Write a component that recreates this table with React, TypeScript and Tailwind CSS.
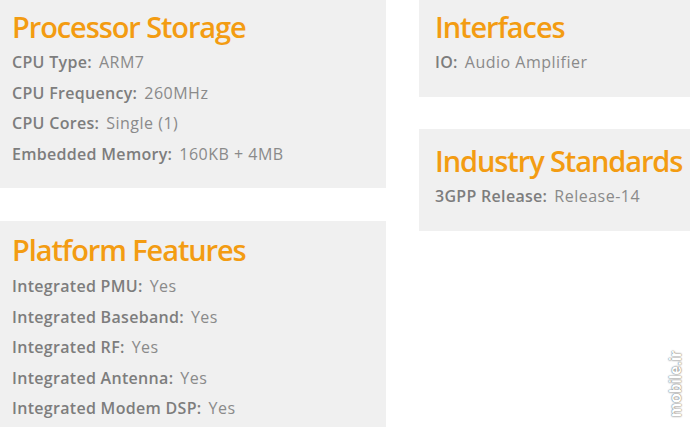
import React from 'react'

type Spec = { label: string; value: string }

const font = { fontFamily: '"Open Sans", "Noto Sans", sans-serif' }

const Row = ({ label, value }: Spec) => (
  <div className="h-[30.5px] leading-[30.5px] text-[16px] whitespace-nowrap">
    <span className="font-semibold text-[#7d7d7d] tracking-[0.3px]">{label}:</span>
    <span className="ml-[7px] text-[#8a8a8a] tracking-[0.5px]">{value}</span>
  </div>
)

const Heading = ({ children }: { children: React.ReactNode }) => (
  <h2 className="text-[29px] leading-[36px] font-semibold text-[#f39c12] tracking-[-1.1px] whitespace-nowrap">
    {children}
  </h2>
)

const App = () => {
  return (
    <div
      className="relative w-[690px] h-[427px] overflow-hidden bg-white flex gap-[33px]"
      style={font}
    >
      {/* left column */}
      <div className="w-[386px] flex flex-col gap-[33px] shrink-0">
        <section className="h-[188px] shrink-0 bg-[#f0f0f0] pl-[12px] pt-[9px]">
          <Heading>Processor Storage</Heading>
          <div className="mt-[2px]">
            <Row label="CPU Type" value="ARM7" />
            <Row label="CPU Frequency" value="260MHz" />
            <Row label="CPU Cores" value="Single (1)" />
            <Row label="Embedded Memory" value="160KB + 4MB" />
          </div>
        </section>
        <section className="h-[220px] shrink-0 bg-[#f0f0f0] pl-[12px] pt-[11px]">
          <Heading>Platform Features</Heading>
          <div className="mt-[3px]">
            <Row label="Integrated PMU" value="Yes" />
            <Row label="Integrated Baseband" value="Yes" />
            <Row label="Integrated RF" value="Yes" />
            <Row label="Integrated Antenna" value="Yes" />
            <Row label="Integrated Modem DSP" value="Yes" />
          </div>
        </section>
      </div>

      {/* right column */}
      <div className="flex-1 flex flex-col gap-[32px]">
        <section className="h-[97px] shrink-0 bg-[#f0f0f0] pl-[16px] pt-[9px]">
          <Heading>Interfaces</Heading>
          <div className="mt-[2px]">
            <Row label="IO" value="Audio Amplifier" />
          </div>
        </section>
        <section className="h-[102px] shrink-0 bg-[#f0f0f0] pl-[16px] pt-[14px]">
          <Heading>Industry Standards</Heading>
          <div className="mt-[2px]">
            <Row label="3GPP Release" value="Release-14" />
          </div>
        </section>
      </div>

      {/* watermark */}
      <span
        className="absolute left-[676px] top-[384px] -translate-x-1/2 -translate-y-1/2 -rotate-90 text-[16px] font-bold text-white whitespace-nowrap [text-shadow:0_0_1px_#666,0_0_2px_#888]"
        style={{ fontFamily: '"Liberation Sans", Arial, sans-serif' }}
      >
        mobile.ir
      </span>
    </div>
  )
}

export default App
